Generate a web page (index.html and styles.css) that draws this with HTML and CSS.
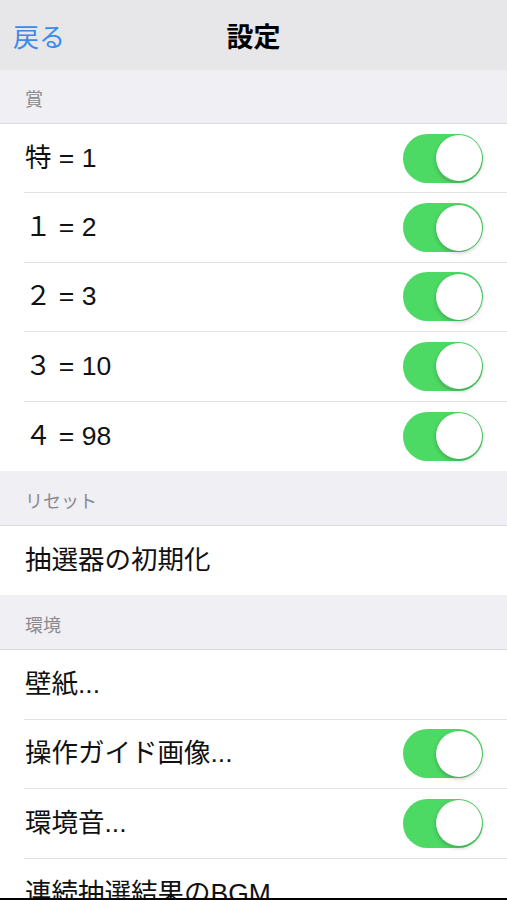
FILE: index.html
```html
<!DOCTYPE html>
<html lang="ja">
<head>
<meta charset="utf-8">
<title>設定</title>
<link rel="stylesheet" href="styles.css">
</head>
<body>
<div class="screen">
  <header class="navbar">
    <span class="back">戻る</span>
    <span class="title">設定</span>
  </header>

  <div class="section-header">賞</div>
  <div class="group">
    <div class="row"><span class="label">特 = 1</span><span class="toggle on"><span class="knob"></span></span></div>
    <div class="row"><span class="label">１ = 2</span><span class="toggle on"><span class="knob"></span></span></div>
    <div class="row"><span class="label">２ = 3</span><span class="toggle on"><span class="knob"></span></span></div>
    <div class="row"><span class="label">３ = 10</span><span class="toggle on"><span class="knob"></span></span></div>
    <div class="row"><span class="label">４ = 98</span><span class="toggle on"><span class="knob"></span></span></div>
  </div>

  <div class="section-header">リセット</div>
  <div class="group">
    <div class="row"><span class="label">抽選器の初期化</span></div>
  </div>

  <div class="section-header">環境</div>
  <div class="group">
    <div class="row"><span class="label">壁紙...</span></div>
    <div class="row"><span class="label">操作ガイド画像...</span><span class="toggle on"><span class="knob"></span></span></div>
    <div class="row"><span class="label">環境音...</span><span class="toggle on"><span class="knob"></span></span></div>
    <div class="row"><span class="label">連続抽選結果のBGM...</span></div>
  </div>
</div>
</body>
</html>
```

FILE: styles.css
```css
html, body {
  margin: 0;
  padding: 0;
  background: #000;
}
body {
  font-family: "Liberation Sans", "Noto Sans CJK JP", sans-serif;
  width: 507px;
  height: 900px;
  overflow: hidden;
}
.screen {
  width: 507px;
  height: 898px;
  overflow: hidden;
  background: #efeff4;
}
.navbar {
  height: 70px;
  background: #e7e7e9;
  display: grid;
  grid-template-columns: 1fr auto 1fr;
  align-items: center;
  padding: 0 13px;
  box-sizing: border-box;
}
.back {
  color: #3a8ce9;
  font-size: 26px;
  font-family: "Noto Sans CJK JP", sans-serif;
  justify-self: start;
  margin-top: 1px;
}
.title {
  color: #000;
  font-size: 27px;
  font-weight: bold;
  font-family: "Noto Sans CJK JP", sans-serif;
  grid-column: 2;
  margin-top: 1px;
}
.section-header {
  height: 54px;
  box-sizing: border-box;
  display: flex;
  align-items: flex-end;
  padding: 0 0 14px 25px;
  color: #8a8a8f;
  font-size: 18px;
  font-family: "Noto Sans CJK JP", sans-serif;
  line-height: 22px;
}
.section-header:first-of-type {
  height: 53px;
}
.group {
  background: #fff;
  border-top: 1px solid #d9d9de;
}
.row {
  height: 69.4px;
  box-sizing: border-box;
  display: flex;
  align-items: center;
  justify-content: space-between;
  margin-left: 24px;
  padding-right: 24px;
  border-bottom: 1px solid #e2e2e6;
}
.group .row:last-child {
  border-bottom: none;
}
.label {
  color: #111;
  font-size: 26.5px;
  line-height: 32px;
  padding-left: 1px;
  margin-top: -1px;
  white-space: nowrap;
}
.toggle {
  width: 80px;
  height: 49px;
  border-radius: 25px;
  background: #4cd964;
  display: flex;
  align-items: center;
  justify-content: flex-end;
  padding: 0 1px;
  box-sizing: border-box;
}
.knob {
  width: 46px;
  height: 46px;
  border-radius: 50%;
  background: #fff;
  box-shadow: 0 2px 4px rgba(0,0,0,0.22), 0 0 0 0.5px rgba(0,0,0,0.06);
}
```
